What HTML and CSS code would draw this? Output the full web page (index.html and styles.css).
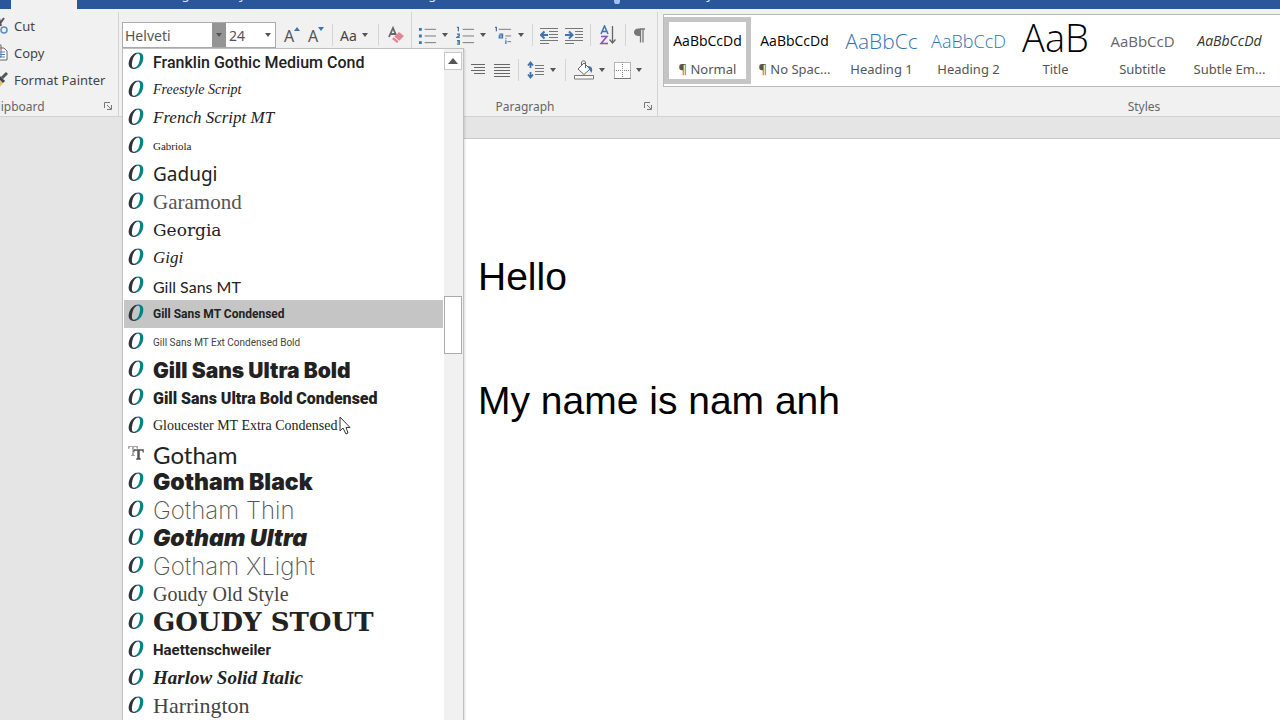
FILE: index.html
```html
<!DOCTYPE html>
<html lang="en">
<head>
<meta charset="utf-8">
<title>Document editor</title>
<link rel="stylesheet" href="styles.css">
</head>
<body>
<svg class="defs" aria-hidden="true">
  <defs>
    <linearGradient id="duo" x1="0" y1="0" x2="1" y2="0"><stop offset=".5" stop-color="#303438"/><stop offset=".55" stop-color="#078287"/></linearGradient>
    <symbol id="otf" viewBox="0 0 16 18"><path fill="url(#duo)" fill-rule="evenodd" d="M10 0.500C14 0.500 16 3 15.200 7.500C14.300 13 10.500 17 6 17C2 17 0 14 .8 10C1.700 5 5.500 .500 10 .500ZM9.800 1.700C7 1.700 5 5.500 4.200 9.700C3.500 13.500 4 15.800 6.200 15.800C9 15.800 11 12 11.800 7.800C12.500 4.200 12 1.700 9.800 1.700Z"/></symbol>
    <symbol id="ttf" viewBox="0 0 16 18"><path fill="#a8a8a8" d="M0 2H10V5H9L8 3H6V11H7V12H3V11H4V3H2L1 5H0Z"/><path fill="#555" stroke="#fff" stroke-width=".5" d="M5 5H16V9H15L14 7H12V14H13V16H8V14H9V7H7L6 9H5Z"/></symbol>
    <symbol id="down" viewBox="0 0 8 5"><path fill="#555" d="M1 0H7L4 4Z"/></symbol>
    <symbol id="launch" viewBox="0 0 8 8"><path fill="none" stroke="#777" d="M.5 6V.5H6M3 3L7 7M7.500 3V7.500H3"/></symbol>
  </defs>
</svg>
<div class="app">
  <nav class="tabs">
    <div class="tab-home"></div>
    <span class="tab">Design</span>
    <span class="tab">Layout</span>
    <span class="tab wide">Mailings</span>
    <svg class="bulb" viewBox="0 0 6 4"><path fill="#9fc0f0" d="M0 0H6V2L5 4H1L0 2Z"/></svg>
    <span class="tab tell">Tell me what you want</span>
  </nav>
  <header class="ribbon">
    <section class="group clipboard">
      <div class="commands">
        <button class="command"><svg class="i-clip" viewBox="0 0 16 18"><path d="M12 1L4 12M7 1L9 9" stroke="#555" stroke-width="2" fill="none"/><circle cx="12" cy="13" r="3" fill="none" stroke="#5b8cc4" stroke-width="1.500"/></svg>Cut</button>
        <button class="command"><svg class="i-clip" viewBox="0 0 16 18"><path d="M1 1H9V13H1ZM6 4H12L15 7V16H6Z" fill="#fff" stroke="#666"/><path d="M8 8H13M8 10.500H13M8 13H13" stroke="#4f81bd"/></svg>Copy</button>
        <button class="command"><svg class="i-clip" viewBox="0 0 16 18"><path d="M4 6L11 12L7 17L0 16V9Z" fill="#ecc06d"/><path d="M6 5L12 11" stroke="#444" stroke-width="3"/><path d="M10 7L15 2" stroke="#555" stroke-width="3"/></svg>Format Painter</button>
      </div>
      <footer class="caption"><span>Clipboard</span><svg class="launch"><use href="#launch"/></svg></footer>
    </section>
    <section class="group font">
      <div class="tools">
        <div class="combo">
          <input class="combo-name" aria-label="Font" value="Helveti">
          <button class="combo-open" aria-label="Open font list"><svg class="down"><use href="#down"/></svg></button>
          <input class="combo-size" aria-label="Font size" value="24">
          <button class="combo-sizes" aria-label="Open size list"><svg class="down"><use href="#down"/></svg></button>
          <div class="menu">
            <ul class="fonts">
              <li class="f-franklin"><svg><use href="#otf"/></svg><span>Franklin Gothic Medium Cond</span></li>
              <li class="f-freestyle"><svg><use href="#otf"/></svg><span>Freestyle Script</span></li>
              <li class="f-french"><svg><use href="#otf"/></svg><span>French Script MT</span></li>
              <li class="f-gabriola"><svg><use href="#otf"/></svg><span>Gabriola</span></li>
              <li class="f-gadugi"><svg><use href="#otf"/></svg><span>Gadugi</span></li>
              <li class="f-garamond"><svg><use href="#otf"/></svg><span>Garamond</span></li>
              <li class="f-georgia"><svg><use href="#otf"/></svg><span>Georgia</span></li>
              <li class="f-gigi"><svg><use href="#otf"/></svg><span>Gigi</span></li>
              <li class="f-gill"><svg><use href="#otf"/></svg><span>Gill Sans MT</span></li>
              <li class="f-gillcond active"><svg><use href="#otf"/></svg><span>Gill Sans MT Condensed</span></li>
              <li class="f-gillext"><svg><use href="#otf"/></svg><span>Gill Sans MT Ext Condensed Bold</span></li>
              <li class="f-gillultra"><svg><use href="#otf"/></svg><span>Gill Sans Ultra Bold</span></li>
              <li class="f-gillultracond"><svg><use href="#otf"/></svg><span>Gill Sans Ultra Bold Condensed</span></li>
              <li class="f-gloucester"><svg><use href="#otf"/></svg><span>Gloucester MT Extra Condensed</span></li>
              <li class="f-gotham"><svg><use href="#ttf"/></svg><span>Gotham</span></li>
              <li class="f-gothamblack"><svg><use href="#otf"/></svg><span>Gotham Black</span></li>
              <li class="f-gothamthin"><svg><use href="#otf"/></svg><span>Gotham Thin</span></li>
              <li class="f-gothamultra"><svg><use href="#otf"/></svg><span>Gotham Ultra</span></li>
              <li class="f-gothamthin"><svg><use href="#otf"/></svg><span>Gotham XLight</span></li>
              <li class="f-goudy"><svg><use href="#otf"/></svg><span>Goudy Old Style</span></li>
              <li class="f-stout"><svg><use href="#otf"/></svg><span>GOUDY STOUT</span></li>
              <li class="f-haett"><svg><use href="#otf"/></svg><span>Haettenschweiler</span></li>
              <li class="f-harlow"><svg><use href="#otf"/></svg><span>Harlow Solid Italic</span></li>
              <li class="f-harrington"><svg><use href="#otf"/></svg><span>Harrington</span></li>
            </ul>
            <div class="scroll">
              <button class="scroll-up" aria-label="Scroll up"><svg viewBox="0 0 10 6"><path fill="#555" d="M0 6L5 0L10 6Z"/></svg></button>
              <div class="thumb"></div>
            </div>
            <svg class="pointer" viewBox="0 0 12 19"><path fill="#fff" stroke="#333" d="M1 1V15L4 12L7 18L9 17L7 11.500H11Z"/></svg>
          </div>
        </div>
        <button class="tool grow" aria-label="Grow font">A<svg viewBox="0 0 6 4"><path fill="#3f73ae" d="M0 4L3 0L6 4Z"/></svg></button>
        <button class="tool grow" aria-label="Shrink font">A<svg viewBox="0 0 6 4"><path fill="#3f73ae" d="M0 0H6L3 4Z"/></svg></button>
        <i class="rule"></i>
        <button class="tool case">Aa<svg class="down"><use href="#down"/></svg></button>
        <i class="rule"></i>
        <button class="tool" aria-label="Clear formatting"><svg class="i-clear" viewBox="0 0 18 20"><path d="M2 12L6 3L9 10M3.500 9H8" fill="none" stroke="#666" stroke-width="1.800"/><path d="M5 14L12 7L17 11L10 18Z" fill="#e58497"/><path d="M7 12L12 16" stroke="#fff"/></svg></button>
      </div>
    </section>
    <section class="group paragraph">
      <div class="tools">
        <button class="tool" aria-label="Bullets"><svg class="i-list" viewBox="0 0 20 20"><path d="M7 3.500H19M7 10.500H19M7 17.500H19" stroke="#777"/><path d="M1 2H4V5H1ZM1 9H4V12H1ZM1 16H4V19H1Z" fill="#3f73ae"/></svg><svg class="down"><use href="#down"/></svg></button>
        <button class="tool" aria-label="Numbering"><svg class="i-list" viewBox="0 0 20 20"><path d="M7 3.500H19M7 10.500H19M7 17.500H19" stroke="#777"/><path d="M1 1.500H2.500V5.500M1 8.500H3.500V10L1 12H4M1 15.500H3.500V19H1M1.500 17H3.500" fill="none" stroke="#3f73ae" stroke-width="1.300"/></svg><svg class="down"><use href="#down"/></svg></button>
        <button class="tool" aria-label="Multilevel list"><svg class="i-list" viewBox="0 0 20 20"><path d="M5 3.500H18M12 10.500H18M14 16.500H18" stroke="#777"/><path d="M1 1.500H2.500V5.500M5.500 8.500H9V12.500H5.500V10.500H9M12.500 15V19M12.500 13V14" fill="none" stroke="#3f73ae" stroke-width="1.300"/></svg><svg class="down"><use href="#down"/></svg></button>
        <i class="rule"></i>
        <button class="tool" aria-label="Decrease indent"><svg class="i-indent" viewBox="0 0 18 17"><path d="M0 1.500H18M9 4.500H18M9 7.500H18M9 10.500H18M0 13.500H18M0 16.500H9" stroke="#777"/><path d="M8 8H1M4.500 4.500L1 8L4.500 11.500" fill="none" stroke="#3f73ae" stroke-width="2"/></svg></button>
        <button class="tool" aria-label="Increase indent"><svg class="i-indent" viewBox="0 0 18 17"><path d="M0 1.500H18M10 4.500H18M10 7.500H18M10 10.500H18M0 13.500H18M0 16.500H9" stroke="#777"/><path d="M0 8H7M4 4.500L7.500 8L4 11.500" fill="none" stroke="#3f73ae" stroke-width="2"/></svg></button>
        <i class="rule"></i>
        <button class="tool" aria-label="Sort"><svg class="i-sort" viewBox="0 0 16 20"><path d="M1 9L4.500 1L8 9M2 6.500H7" fill="none" stroke="#3f73ae" stroke-width="1.500"/><path d="M1 11.500H7L1 18.500H8" fill="none" stroke="#8a4fb0" stroke-width="1.500"/><path d="M12.500 1V18M9.500 14.500L12.500 18L15.500 14.500" fill="none" stroke="#666" stroke-width="1.300"/></svg></button>
        <i class="rule"></i>
        <button class="tool" aria-label="Show marks"><svg class="i-mark" viewBox="0 0 11 15"><path d="M6.500 14.500V1H11M9 1V14.500" fill="none" stroke="#777" stroke-width="1.300"/><path d="M6.500 .5V8C2 8.500 0 7 0 4.300C0 1.500 2 0 6.500 .5Z" fill="#777"/></svg></button>
      </div>
      <div class="tools second">
        <button class="tool" aria-label="Align right"><svg class="i-align" viewBox="0 0 16 14"><path d="M1 1.500H15M4 4.500H15M1 7.500H15M4 10.500H15" stroke="#666"/></svg></button>
        <button class="tool" aria-label="Justify"><svg class="i-align" viewBox="0 0 16 14"><path d="M0 1.500H16M0 4.500H16M0 7.500H16M0 10.500H16M0 13.500H16" stroke="#666"/></svg></button>
        <i class="rule"></i>
        <button class="tool" aria-label="Line spacing"><svg class="i-space" viewBox="0 0 18 18"><path d="M8 4.500H17M8 7.500H17M8 10.500H17M8 13.500H17" stroke="#777"/><path d="M3.500 2V7M1 4.500L3.500 1.500L6 4.500M3.500 11V16M1 13.500L3.500 16.500L6 13.500" fill="none" stroke="#3f73ae" stroke-width="1.800"/></svg><svg class="down"><use href="#down"/></svg></button>
        <i class="rule"></i>
        <button class="tool" aria-label="Shading"><svg class="i-fill" viewBox="0 0 20 20"><path d="M4 9L10 3L16 9L10 14.500Z" fill="#fff" stroke="#666"/><path d="M7.500 6V3C7.500 0 11.500 0 11.500 3V8" fill="none" stroke="#666"/><path d="M14 6C18 6 19 9 17.500 13L15 9Z" fill="#3f73ae"/><path d="M.5 15.500H19.500V19H.5Z" fill="#fff" stroke="#777"/></svg><svg class="down"><use href="#down"/></svg></button>
        <button class="tool" aria-label="Borders"><svg class="i-border" viewBox="0 0 17 17"><path d="M.5 .5H16.500V16.500H.5Z" fill="#fff" stroke="#777" stroke-dasharray="1 1"/><path d="M8.500 0V17M0 8.500H17" stroke="#888" stroke-dasharray="1 1"/><path d="M0 16.500H17" stroke="#777"/></svg><svg class="down"><use href="#down"/></svg></button>
      </div>
      <footer class="caption"><span>Paragraph</span><svg class="launch"><use href="#launch"/></svg></footer>
    </section>
    <section class="group styles">
      <div class="gallery">
        <button class="style selected"><span class="sample">AaBbCcDd</span><span class="label">¶ Normal</span></button>
        <button class="style"><span class="sample">AaBbCcDd</span><span class="label">¶ No Spac...</span></button>
        <button class="style"><span class="sample heading1">AaBbCc</span><span class="label">Heading 1</span></button>
        <button class="style"><span class="sample heading2">AaBbCcD</span><span class="label">Heading 2</span></button>
        <button class="style"><span class="sample title">AaB</span><span class="label">Title</span></button>
        <button class="style"><span class="sample subtitle">AaBbCcD</span><span class="label">Subtitle</span></button>
        <button class="style"><span class="sample emphasis">AaBbCcDd</span><span class="label">Subtle Em...</span></button>
      </div>
      <footer class="caption"><span>Styles</span></footer>
    </section>
  </header>
  <main class="workspace">
    <article class="page">
      <p>Hello</p>
      <p>My name is nam anh</p>
    </article>
  </main>
</div>
</body>
</html>
```
FILE: styles.css
```css
* { box-sizing: border-box; }
body { margin: 0; font-family: "Noto Sans", "Open Sans", sans-serif; font-size: 13px; color: #444; }
button { font: inherit; color: inherit; background: none; border: 0; padding: 0; }
input { font: inherit; color: inherit; border: 0; padding: 0; min-width: 0; outline: 0; }
.defs { position: absolute; width: 0; height: 0; }
.app { height: 100vh; display: flex; flex-direction: column; overflow: hidden; background: #e5e5e5; }
.tabs { flex: none; display: flex; height: 9px; overflow: hidden; background: #2a579a; padding-left: 11px; color: #dfe8f5; }
.tab-home { flex: none; width: 66px; height: 9px; background: #f1f1f1; }
.tab { flex: none; width: 70px; margin-top: -16px; line-height: 20px; white-space: nowrap; }
.tab-home + .tab { margin-left: 78px; }
.tab.wide { margin-left: 96px; width: 150px; }
.tab.tell { margin-left: 6px; width: auto; }
.bulb { flex: none; width: 6px; height: 4px; margin-left: 73px; }
.ribbon { flex: none; height: 108px; display: flex; background: #f1f1f1; border-bottom: 1px solid #d2d2d2; padding-top: 3px; }
.group { display: flex; flex-direction: column; height: 104px; }
.group + .group { border-left: 1px solid #d4d4d4; }
.caption { margin-top: auto; display: flex; align-items: center; height: 20px; font-size: 12px; color: #666; }
.caption span { flex: 1; text-align: center; }
.launch { width: 8px; height: 8px; margin-right: 6px; }
.clipboard { width: 118px; flex: none; }
.clipboard .caption span { flex: none; margin-left: -10px; }
.clipboard .launch { margin-left: auto; }
.commands { display: flex; flex-direction: column; }
.command { display: flex; align-items: center; gap: 6px; height: 27px; margin-left: -8px; white-space: nowrap; }
.i-clip { width: 16px; height: 18px; }
.font { width: 293px; flex: none; padding-left: 3px; }
.tools { display: flex; align-items: center; height: 26px; margin-top: 10px; }
.tool { display: flex; align-items: center; gap: 4px; height: 24px; }
.down { width: 8px; height: 5px; }
.rule { width: 1px; height: 22px; background: #d4d4d4; }
.combo { position: relative; display: flex; width: 154px; height: 26px; border: 1px solid #ababab; background: #fff; font-size: 14px; color: #555; }
.combo-name { width: 89px; padding-left: 2px; }
.combo-open { width: 14px; background: #959595; display: grid; place-items: center; }
.combo-size { flex: 1; padding-left: 3px; }
.combo-sizes { width: 14px; display: grid; place-items: center; }
.grow { font-size: 16px; align-items: flex-end; gap: 0; margin-left: 8px; line-height: 22px; width: 16px; color: #555; }
.grow svg { width: 6px; height: 4px; margin-bottom: 16px; flex: none; }
.font .rule { margin-left: 8px; }
.case { font-size: 14px; margin-left: 7px; width: 30px; }
.i-clear { width: 18px; height: 20px; margin-left: 8px; }
.menu { position: absolute; z-index: 2; left: -1px; top: 25px; width: 342px; height: 680px; display: flex; background: #fff; border: 1px solid #c0c0c0; box-shadow: 1px 1px 2px #0002; color: #222; }
.fonts { flex: 1; margin: -1px 0 0; padding: 0 0 0 1px; list-style: none; }
.fonts li { display: flex; align-items: center; gap: 9px; height: 28px; padding-left: 4px; white-space: nowrap; }
.fonts li svg { width: 16px; height: 18px; flex: none; margin-bottom: 3px; }
.fonts li.active { background: #c5c5c5; }
.scroll { width: 19px; margin-left: 1px; padding: 3px 0 0; background: #f1f1f1; }
.scroll-up { width: 18px; height: 18px; display: grid; place-items: center; background: #fff; border: 1px solid #c8c8c8; }
.scroll-up svg { width: 10px; height: 6px; }
.thumb { width: 18px; height: 58px; margin-top: 226px; background: #fff; border: 1px solid #ababab; }
.pointer { position: absolute; left: 216px; top: 367px; width: 12px; height: 19px; }
.f-franklin { font: 500 16px "Roboto", sans-serif; }
.f-freestyle { font: italic 14px "Liberation Serif", cursive; }
.f-french { font: italic 17px "Liberation Serif", cursive; }
.f-gabriola { font: 11px "Liberation Serif", serif; }
.f-gadugi { font: 19px "Noto Sans", sans-serif; }
.f-garamond { font: 21px "Liberation Serif", serif; color: #555; }
.f-georgia { font: 17px "DejaVu Serif", serif; }
.f-gigi { font: italic 17px "Liberation Serif", cursive; }
.f-gill { font: 16px "Lato", sans-serif; }
.f-gillcond { font: 700 12px "Roboto", sans-serif; }
.f-gillext { font: 10px "Roboto", sans-serif; color: #444; }
.f-gillultra { font: 900 21px "Inter", sans-serif; }
.f-gillultracond { font: 900 16px "Roboto", sans-serif; }
.f-gloucester { font: 14px "Liberation Serif", serif; }
.f-gotham { font: 24px "Lato", sans-serif; }
.f-gothamblack { font: 900 23px "Inter", sans-serif; }
.f-gothamthin { font: 200 24px "Inter", sans-serif; color: #555; }
.f-gothamultra { font: italic 900 23px "Inter", sans-serif; }
.f-goudy { font: 20px "Liberation Serif", serif; color: #444; }
.f-stout { font: 700 26px "DejaVu Serif", serif; }
.f-haett { font: 700 15px "Roboto", sans-serif; }
.f-harlow { font: italic 700 19px "Liberation Serif", serif; }
.f-harrington { font: 22px "Liberation Serif", serif; color: #444; }
.paragraph { width: 246px; flex: none; padding: 0 5px 0 6px; }
.paragraph .tools { gap: 7px; }
.paragraph .tools.second { gap: 8px; padding-left: 52px; margin-top: 9px; }
.paragraph .caption span { padding-right: 12px; }
.paragraph .launch { margin-right: 0; }
.i-list { width: 19px; height: 19px; }
.i-indent { width: 18px; height: 17px; }
.i-sort { width: 20px; height: 20px; }
.i-mark { width: 13px; height: 15px; }
.i-align { width: 16px; height: 14px; }
.i-space { width: 18px; height: 18px; }
.i-fill { width: 20px; height: 20px; }
.i-border { width: 17px; height: 17px; }
.styles { flex: 1; min-width: 0; }
.styles .caption { padding-left: 344px; }
.styles .caption span { flex: none; width: 284px; }
.gallery { display: flex; margin: 2px 0 0 5px; padding-top: 2px; height: 73px; background: #fff; border: 1px solid #bbb; border-right: 0; overflow: hidden; }
.style { flex: none; width: 87px; height: 67px; display: flex; flex-direction: column; align-items: center; padding: 5px 6px 0; border: 0 solid #c5c5c5; }
.style.selected { border: 5px solid #c5c5c5; padding: 0; }
.sample { flex: none; height: 36px; width: 100%; overflow: hidden; line-height: 38px; font-family: "Open Sans", sans-serif; font-size: 14px; color: #000; white-space: nowrap; text-align: center; }
.label { flex: none; line-height: 22px; color: #555; white-space: nowrap; }
.heading1 { font-size: 21px; font-weight: 300; color: #2e74b5; }
.heading2 { font-size: 18px; font-weight: 300; color: #2e74b5; }
.title { font-size: 38px; font-weight: 300; line-height: 30px; }
.subtitle { color: #666; font-size: 15px; }
.emphasis { font-style: italic; color: #333; }
.workspace { flex: 1; min-height: 0; padding: 21px 0 0 300px; display: flex; }
.page { flex: 1; background: #fff; border-top: 1px solid #c8c8c8; padding: 110px 0 0 178px; font-family: "Liberation Sans", sans-serif; font-size: 39px; line-height: 56px; color: #000; }
.page p { margin: 0 0 68px; }
```
